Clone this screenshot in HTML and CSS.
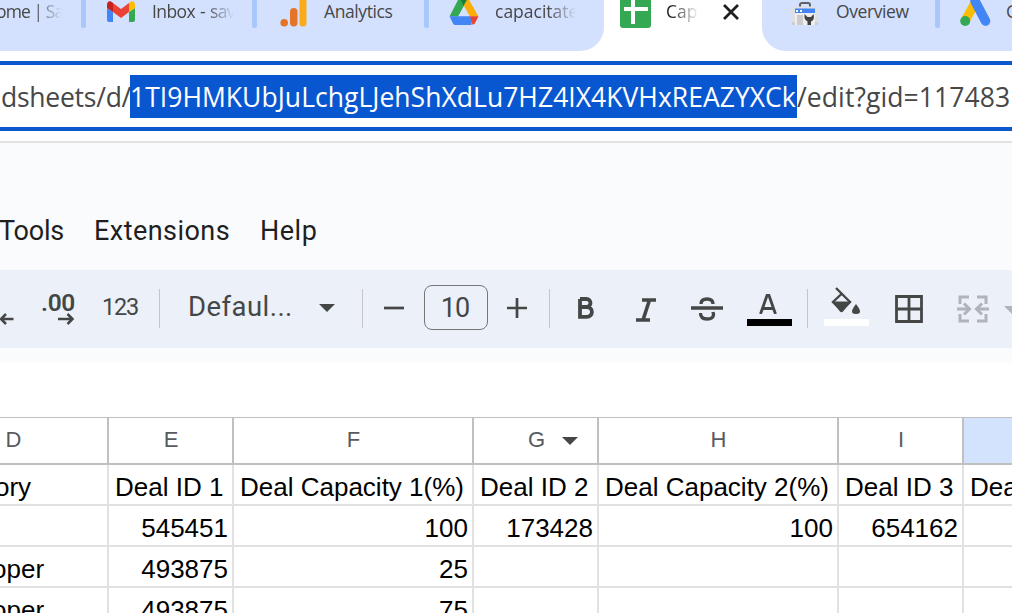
FILE: index.html
```html
<!DOCTYPE html>
<html lang="en">
<head>
<meta charset="utf-8">
<title>Capacity sheet</title>
<link rel="stylesheet" href="styles.css">
</head>
<body>
<header class="tabs">
  <div class="group group-left">
    <div class="tab tab-home"><span class="label fade label-home">ome | Sa</span></div>
    <i class="sep"></i>
    <div class="tab tab-mail">
      <svg class="ico-mail" width="30" height="24" viewBox="0 0 30 24"><path fill="#4285f4" d="M1 8l6 4v10H3q-2 0-2-2z"/><path fill="#34a853" d="M23 12l6-4v12q0 2-2 2h-4z"/><path fill="#ea4335" d="M7 3l8 6 8-6v9l-8 6-8-6z"/><path fill="#c5221f" d="M1 8V5C1 1 4 0 7 3v9z"/><path fill="#fbbc04" d="M29 8V5c0-4-3-5-6-2v9z"/></svg>
      <span class="label fade label-mail">Inbox - sav</span>
    </div>
    <i class="sep"></i>
    <div class="tab tab-analytics">
      <svg width="28" height="28" viewBox="0 0 28 28"><rect x="19.500" y="-6" width="7" height="32.500" rx="3" fill="#f9ab1a"/><rect x="10" y="8" width="7.500" height="18.500" rx="3.700" fill="#e37428"/><circle cx="4.200" cy="22.800" r="3.800" fill="#e37428"/></svg>
      <span class="label label-analytics">Analytics</span>
    </div>
    <i class="sep"></i>
    <div class="tab tab-drive">
      <svg width="30" height="26" viewBox="0 0 30 26"><path fill="#34a853" d="M10-2h5l3 2.500L14.800 6 9 16.500H.5z"/><path fill="#188038" d="M10-2h10l-5.200 8L11-1z"/><path fill="#fbae08" d="M14.800 5.500L19-2l10.500 18.500H21z"/><path fill="#4285f4" d="M.5 16.200H21.500L23 20l-.5 5H6.500Q5 25 4 23.500z"/><path fill="#ea4335" d="M21 16.200h8.500L25.500 24l-2 .8z"/></svg>
      <span class="label fade label-drive">capacitate</span>
    </div>
  </div>
  <div class="active">
    <svg width="31" height="28" viewBox="0 0 31 28"><path fill="#34a853" d="M0-5h31v30q0 3-3 3H3q-3 0-3-3z"/><path stroke="#fff" stroke-width="4" d="M4 9h24M13 0v24"/></svg>
    <span class="label fade label-active">Cap</span>
    <svg class="close" width="16" height="16" viewBox="0 0 16 16"><path stroke="#1f1f1f" stroke-width="2.800" d="M1 1l14 14M15 1L1 15"/></svg>
  </div>
  <div class="group group-right">
    <div class="tab tab-overview">
      <svg width="26" height="24" viewBox="0 0 26 24"><path fill="none" stroke="#616161" stroke-width="2" d="M8 5V3q0-2 2-2h6q2 0 2 2v2"/><path fill="#e0e0e0" d="M2 4.500h22l2 3V23H0V7.500z"/><path fill="#cfcfcf" d="M0 20h26v3H0z"/><path fill="#4285f4" d="M3 6.500h20v4.500H3z"/><path fill="#fff" d="M4 8h2v2H4zM8 8h2v2H8z"/><path fill="#eee" d="M3 11h20v12H3z"/><path fill="#ccc" d="M5 13h6v10H5z"/><path fill="#424242" d="M12.500 12v4q1 3 3 3.500V23h3.500v-3.500q4-1.500 2.500-7.500l-2.500 3h-3.500z"/></svg>
      <span class="label label-overview">Overview</span>
    </div>
    <i class="sep"></i>
    <div class="tab tab-ads">
      <svg width="31" height="27" viewBox="0 0 31 27"><path stroke="#fbbc04" stroke-width="9" d="M5 21L16 1"/><circle cx="5.200" cy="21" r="5" fill="#34a853"/><path stroke="#4285f4" stroke-width="9.500" stroke-linecap="round" d="M15 1l10.500 20"/></svg>
      <span class="label label-ads">G</span>
    </div>
  </div>
</header>
<div class="omnibox"><span class="url-head">dsheets/d/</span><span class="url-sel">1TI9HMKUbJuLchgLJehShXdLu7HZ4IX4KVHxREAZYXCk</span><span class="url-tail">/edit?gid=117483</span></div>
<nav class="menu"><span class="m-tools">Tools</span><span class="m-ext">Extensions</span><span class="m-help">Help</span></nav>
<div class="toolbar">
  <svg class="t-dec" width="14" height="12" viewBox="0 0 14 12"><path fill="none" stroke="#444746" stroke-width="2.500" d="M13.500 6H1M6 1L1 6l5 5"/></svg>
  <div class="t-inc"><span class="zeros">.00</span><svg width="17" height="12" viewBox="0 0 17 12"><path fill="none" stroke="#444746" stroke-width="2.500" d="M0 6h14M9.500 1l5 5-5 5"/></svg></div>
  <span class="t-123">123</span>
  <i class="rule r1"></i>
  <span class="t-font">Defaul...</span>
  <svg class="t-caret" width="16" height="8" viewBox="0 0 16 8"><path fill="#444746" d="M0 0h16L8 8z"/></svg>
  <i class="rule r2"></i>
  <svg class="t-minus" width="20" height="20" viewBox="0 0 20 20"><path stroke="#444746" stroke-width="2.700" d="M0 10h20"/></svg>
  <div class="size">10</div>
  <svg class="t-plus" width="20" height="20" viewBox="0 0 20 20"><path stroke="#444746" stroke-width="2.700" d="M0 10h20M10 0v20"/></svg>
  <i class="rule r3"></i>
  <svg class="t-bold" width="17" height="22" viewBox="0 0 17 22"><path fill="none" stroke="#444746" stroke-width="3.800" d="M2 2h6.500a4 4 0 0 1 0 8H2M2 10h7a4.800 4.800 0 0 1 0 9.800H2zM2 2v18"/></svg>
  <svg class="t-italic" width="20" height="24" viewBox="0 0 20 24"><path stroke="#444746" stroke-width="3.600" d="M6 2h14M0 22h14M13.500 2L7 22"/></svg>
  <svg class="t-strike" width="32" height="24" viewBox="0 0 32 24"><path fill="none" stroke="#444746" stroke-width="3.300" d="M0 11h32M10 7q0-5 6-5t6 5M9.500 16q0 6 6.500 6t6.500-4.500l-.5-2.500"/></svg>
  <div class="t-color"><svg width="18" height="20" viewBox="0 0 18 20"><path fill="none" stroke="#444746" stroke-width="2.800" d="M1.500 20L8 1.500h2L16.500 20M4 14.500h10"/></svg><i class="swatch black"></i></div>
  <i class="rule r4"></i>
  <div class="t-fill"><svg width="30" height="27" viewBox="0 0 30 27"><path fill="none" stroke="#444746" stroke-width="2.400" d="M5 1l14 14-8.500 8.500L2 15l9-8.500"/><path fill="#444746" d="M1 14.500h19l-8 10q-1.500 1.500-3 0zM25 17q-8 10 0 10t0-10"/></svg><i class="swatch white"></i></div>
  <svg class="t-border" width="28" height="28" viewBox="0 0 28 28"><path fill="none" stroke="#444746" stroke-width="2.800" d="M1.500 1.500h25v25h-25zM14 1v26M1 14h26"/></svg>
  <svg class="t-merge" width="32" height="28" viewBox="0 0 32 28"><path fill="none" stroke="#b0b3b8" stroke-width="3" d="M12 2H3v7M20 2h9v7M12 26H3v-7M20 26h9v-7M0 14h12M7 8.500l5.500 5.500L7 19.500M32 14H20M25 8.500L19.500 14l5.500 5.500"/></svg>
  <svg class="t-caret2" width="8" height="8" viewBox="0 0 8 8"><path fill="#b0b3b8" d="M0 0h8v8z"/></svg>
</div>
<div class="formula"></div>
<main class="sheet">
  <div class="h hd">D</div><div class="h">E</div><div class="h">F</div><div class="h hg">G<svg width="16" height="8" viewBox="0 0 16 8"><path fill="#444746" d="M0 0h16L8 8z"/></svg></div><div class="h">H</div><div class="h">I</div><div class="h on"></div>
  <div class="c first ory">ory</div><div class="c">Deal ID 1</div><div class="c">Deal Capacity 1(%)</div><div class="c">Deal ID 2</div><div class="c">Deal Capacity 2(%)</div><div class="c">Deal ID 3</div><div class="c last">Dea</div>
  <div class="c"></div><div class="c n">545451</div><div class="c n">100</div><div class="c n">173428</div><div class="c n">100</div><div class="c n">654162</div><div class="c last"></div>
  <div class="c first">oper</div><div class="c n">493875</div><div class="c n">25</div><div class="c"></div><div class="c"></div><div class="c"></div><div class="c last"></div>
  <div class="c first">oper</div><div class="c n">493875</div><div class="c n">75</div><div class="c"></div><div class="c"></div><div class="c"></div><div class="c last"></div>
</main>
</body>
</html>
```
FILE: styles.css
```css
* { box-sizing: border-box; }
body { margin: 0; width: 1012px; height: 613px; overflow: hidden; background: #fff; font-family: "Liberation Sans", Arial, sans-serif; }
svg { display: block; flex: none; }
span { white-space: nowrap; flex: none; }

.tabs { display: flex; height: 51px; font-family: "Open Sans", sans-serif; font-size: 17.500px; letter-spacing: -0.4px; color: #474747; }
.group { display: flex; background: #d3e1ff; overflow: hidden; height: 51px; }
.group-left { width: 604px; border-bottom-right-radius: 24px; }
.group-right { width: 250px; border-bottom-left-radius: 24px; }
.tab { display: flex; align-items: flex-start; overflow: hidden; flex: none; }
.sep { width: 5px; height: 28px; flex: none; background: #a8c7fa; border-radius: 0 0 2px 2px; }
.label { line-height: 24px; margin-top: -1px; }
.fade { -webkit-mask-image: linear-gradient(to right, #000 calc(100% - 28px), transparent); mask-image: linear-gradient(to right, #000 calc(100% - 28px), transparent); }
.tab-home { width: 81px; }
.label-home { width: 66px; margin-left: -4px; letter-spacing: -0.9px; }
.tab-mail { width: 166px; padding-left: 20px; gap: 16px; }
.label-mail { width: 82px; letter-spacing: -0.6px; word-spacing: 1px; }
.tab-analytics { width: 167px; padding-left: 23px; gap: 16px; }
.tab-drive { width: 175px; padding-left: 20px; gap: 16px; }
.label-drive { width: 81px; letter-spacing: 0; }
.active { width: 158px; display: flex; padding-left: 16px; align-items: flex-start; }
.label-active { width: 33px; margin-left: 15px; color: #1f1f1f; letter-spacing: 0; }
.close { margin: 4px 0 0 24px; }
.tab-overview { width: 173px; padding-left: 30px; }
.tab-overview svg { margin-top: 2px; }
.label-overview { margin-left: 18px; }
.tab-ads { width: 72px; padding-left: 20px; gap: 15px; }

.omnibox { margin-top: 10px; height: 70px; border: solid #0b57d0; border-width: 4px 0; display: flex; align-items: center; font-family: "Open Sans", sans-serif; font-size: 26.500px; color: #474747; overflow: hidden; }
.omnibox span { height: 43px; line-height: 45px; }
.url-head { width: 130px; padding-left: 1px; letter-spacing: -0.25px; }
.url-sel { width: 667px; background: #0957d0; color: #fff; letter-spacing: 0.03px; }
.url-tail { letter-spacing: 0.1px; }

.menu { margin-top: 10px; height: 129px; border-top: 2px solid #e1e3e1; background: #f9fbfd; display: flex; padding-top: 72px; font: 27px/32px Roboto, sans-serif; color: #1f1f1f; }
.m-tools { width: 95px; margin-left: -1px; letter-spacing: -0.2px; }
.m-ext { width: 166px; letter-spacing: 0.45px; }
.m-help { letter-spacing: 0.5px; }

.toolbar { height: 78px; background: #ecf0f9; display: flex; align-items: flex-start; color: #444746; font-family: Roboto, sans-serif; overflow: hidden; }
.t-dec { margin-top: 43px; }
.t-inc { width: 33px; margin: 21px 0 0 27px; display: flex; flex-direction: column; }
.zeros { font: 600 24.500px/24px Roboto, sans-serif; letter-spacing: -0.3px; }
.t-inc svg { margin: -2px 0 0 17px; }
.t-123 { width: 37px; margin: 23px 0 0 28px; font: 23.500px/28px Roboto, sans-serif; letter-spacing: -1.2px; }
.rule { width: 1px; height: 39px; margin-top: 19px; background: #c4c7c5; flex: none; }
.r1 { margin-left: 20px; }
.t-font { width: 104px; margin: 21px 0 0 28px; font: 27.500px/32px Roboto, sans-serif; letter-spacing: 0.45px; }
.t-caret { margin: 34px 0 0 27px; }
.r2 { margin-left: 27px; }
.t-minus { margin: 28px 0 0 21px; }
.size { width: 64px; height: 45px; margin: 15px 0 0 20px; border: 1px solid #747775; border-radius: 8px; text-align: center; font: 27px/45px Roboto, sans-serif; letter-spacing: -1px; padding-right: 2px; flex: none; }
.t-plus { margin: 28px 0 0 19px; }
.r3 { margin-left: 22px; }
.t-bold { margin: 27px 0 0 28px; }
.t-italic { margin: 28px 0 0 41px; }
.t-strike { margin: 27px 0 0 35px; }
.t-color { width: 45px; margin: 24px 0 0 24px; display: flex; flex-direction: column; align-items: center; gap: 5px; }
.t-color svg { margin-right: 3px; }
.swatch { width: 45px; height: 7px; flex: none; }
.black { background: #000; }
.white { background: #fff; }
.r4 { margin-left: 15px; }
.t-fill { width: 45px; margin: 17px 0 0 16px; display: flex; flex-direction: column; gap: 5px; }
.t-fill svg { margin-left: 7px; }
.t-border { margin: 25px 0 0 26px; }
.t-merge { margin: 25px 0 0 34px; }
.t-caret2 { margin: 36px 0 0 15px; }

.formula { height: 69px; border-top: 15px solid #f9fbfd; background: #fff; }
.sheet { display: grid; grid-template-columns: 109px 125px 240px 125px 240px 125px 48px; grid-template-rows: 47px repeat(4, 41px); border-top: 1px solid #c0c0c0; }
.h { display: flex; align-items: center; justify-content: center; border: solid #c0c0c0; border-width: 0 2px 2px 0; font-size: 22px; color: #575b5f; padding-bottom: 1px; padding-left: 1px; }
.hd { padding-right: 81px; }
.hg { gap: 17px; padding-left: 35px; }
.hg svg { margin-top: 2px; }
.on { background: #d3e3fd; border-right: 0; }
.c { display: flex; align-items: flex-end; border: solid #e1e1e1; border-width: 0 2px 2px 0; padding: 0 4px 2px 6px; font-size: 26px; line-height: 30px; color: #000; white-space: nowrap; }
.n { justify-content: flex-end; }
.first { padding-left: 0; text-indent: -8px; }
.ory { text-indent: -5px; }
.last { border-right: 0; padding-right: 0; }
```
